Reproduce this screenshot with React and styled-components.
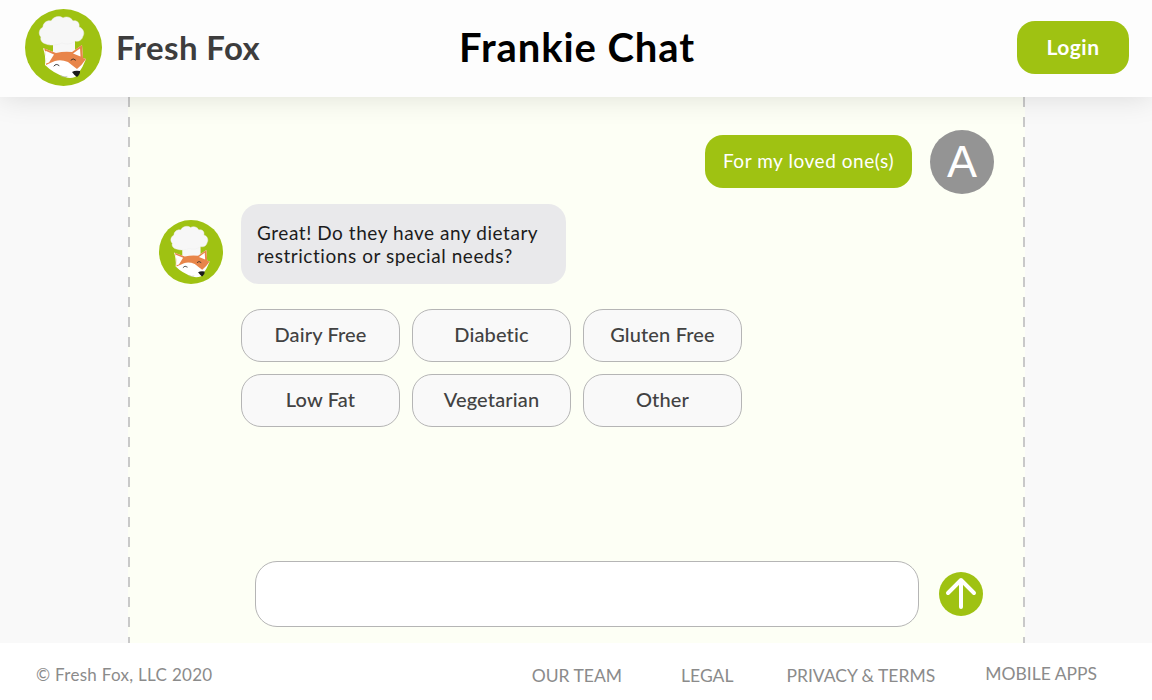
import React from 'react';
import styled, { createGlobalStyle } from 'styled-components';

const GREEN = '#9fc212';
const DASH = 'linear-gradient(#c9c9c9 10px, transparent 10px)';

const GlobalStyle = createGlobalStyle`
  html, body {
    margin: 0;
    padding: 0;
    background: #fff;
    font-family: "Lato", "Noto Sans", sans-serif;
  }
  * { box-sizing: border-box; }
`;

const Page = styled.div`
  width: 1152px;
  height: 700px;
  display: flex;
  flex-direction: column;
  overflow: hidden;
`;

const Header = styled.header`
  position: relative;
  z-index: 2;
  flex: 0 0 97px;
  display: grid;
  grid-template-columns: 1fr auto 1fr;
  align-items: center;
  padding: 0 23px 2px 25px;
  background: #fdfdfd;
  box-shadow: 0 0 28px rgba(0, 0, 0, 0.13);
`;

const Brand = styled.div`
  display: flex;
  align-items: center;
  gap: 14px;
`;

const BrandName = styled.span`
  padding-bottom: 2px;
  font-size: 33px;
  font-weight: 700;
  letter-spacing: 0.4px;
  color: #3d3d3d;
`;

const Title = styled.h1`
  margin: 0;
  padding-bottom: 2px;
  font-size: 40px;
  font-weight: 700;
  letter-spacing: 0.9px;
  color: #000;
`;

const LoginButton = styled.button`
  justify-self: end;
  width: 112px;
  height: 53px;
  padding: 0 0 3px;
  border: none;
  border-radius: 18px;
  background: ${GREEN};
  color: #fff;
  font-family: inherit;
  font-size: 21px;
  font-weight: 700;
  letter-spacing: 0.5px;
`;

const Main = styled.main`
  flex: 1;
  display: flex;
  justify-content: center;
  min-height: 0;
  background: #f9f9f9;
`;

const Panel = styled.section`
  width: 897px;
  margin-left: 1px;
  display: flex;
  flex-direction: column;
  padding: 33px 31px 16px 31px;
  background-color: #fdfff5;
  background-image: ${DASH}, ${DASH};
  background-size: 2px 20px;
  background-position: left top, right top;
  background-repeat: repeat-y;
`;

const UserRow = styled.div`
  display: flex;
  justify-content: flex-end;
  align-items: flex-start;
  gap: 18px;
`;

const BotRow = styled.div`
  display: flex;
  align-items: flex-start;
  gap: 18px;
  margin-top: 10px;
`;

const BotAvatar = styled.div`
  margin-top: 16px;
  height: 64px;
`;

const Bubble = styled.div`
  border-radius: 18px;
  font-size: 19px;
  line-height: 23px;
  letter-spacing: 0.55px;
  ${(p) =>
    p.$mine
      ? `
    height: 53px;
    width: 207px;
    margin-top: 5px;
    padding-bottom: 2px;
    display: flex;
    align-items: center;
    justify-content: center;
    background: ${GREEN};
    color: #fff;
  `
      : `
    width: 325px;
    height: 80px;
    padding: 17px 16px;
    background: #e9e9eb;
    color: #1c1c1c;
  `}
`;

const UserAvatar = styled.div`
  width: 64px;
  height: 64px;
  border-radius: 50%;
  background: #949494;
  color: #fff;
  display: flex;
  align-items: center;
  justify-content: center;
  font-family: "Liberation Sans", sans-serif;
  font-size: 45px;
`;

const Choices = styled.div`
  display: grid;
  grid-template-columns: repeat(3, 159px);
  grid-auto-rows: 53px;
  gap: 12px;
  margin: 25px 0 0 82px;
`;

const Choice = styled.button`
  padding: 0 0 3px;
  border: 1px solid #b5b5b5;
  border-radius: 20px;
  background: #f9f9f9;
  color: #424242;
  font-family: inherit;
  font-size: 20px;
  font-weight: 500;
  letter-spacing: 0.15px;
`;

const Composer = styled.form`
  margin-top: auto;
  display: flex;
  align-items: center;
  gap: 20px;
  padding-left: 96px;
`;

const MessageInput = styled.input`
  width: 664px;
  height: 66px;
  border: 1px solid #b5b5b5;
  border-radius: 22px;
  background: #fff;
`;

const SendButton = styled.button`
  width: 44px;
  height: 44px;
  padding: 0;
  border: none;
  border-radius: 50%;
  background: ${GREEN};
  display: flex;
`;

const Footer = styled.footer`
  position: relative;
  z-index: 1;
  flex: 0 0 57px;
  display: flex;
  justify-content: space-between;
  align-items: center;
  padding: 6px 55px 0 36px;
  background: #fff;
  color: #8b8b8b;
`;

const Copyright = styled.span`
  font-size: 17px;
  letter-spacing: 0.3px;
`;

const FooterNav = styled.nav`
  display: flex;
  align-items: center;
  padding-top: 2px;
`;

const FooterLink = styled.a`
  font-size: 17.5px;
  margin-left: ${(p) => p.$gap}px;
  margin-bottom: ${(p) => (p.$raised ? '4px' : '0')};
`;

const FoxLogo = ({ size }) => (
  <svg width={size} height={size} viewBox="0 0 77 77">
    <circle cx="38.5" cy="38.5" r="38.5" fill={GREEN} />
    {/* chef hat */}
    <rect x="28" y="30" width="22" height="16" fill="#f7f7f7" />
    <path
      d="M21 35c-4-1-6-4-5-7-3-3-2-8 2-10 0-4 4-7 8-6 2-4 8-6 12-3 3-2 8-1 10 3 4-1 7 2 6 6 4 1 6 6 4 9-1 4-4 6-8 5-3 3-9 4-13 2-4 2-11 3-16 1z"
      fill="#f7f7f7"
      stroke="#ededed"
      strokeWidth="0.5"
    />
    {/* fox face */}
    <path
      d="M18 39l13 5q8-2 16-1l10-7 1 13 3 1q-3 8-8 15l-3 3q-5 2-10 0-12-4-20-12 1-9-2-17z"
      fill="#fff"
    />
    <path
      d="M18 39l13 5q8-2 16-1l10-7 1 13 3 1q-4 6-9 10-4-3-9-7-7-3-13-1-5 2-9 4 1-9-2-17z"
      fill="#e8854a"
    />
    <path d="M21 42l8 3.500-5 8-3 1q.5-6-1-12z" fill="#fff" />
    <path d="M55 39.500l-7 5 7.500 3z" fill="#fff" />
    {/* nose and eyes */}
    <path d="M47 63q3-2 8-1 .5 3-3 6-3-2-5-5z" fill="#1a1a1a" />
    <path d="M29 57q2-3 5-.5" stroke="#222" strokeWidth="0.9" fill="none" strokeLinecap="round" />
    <path d="M46 51q2-2.500 4.500 0" stroke="#222" strokeWidth="0.9" fill="none" strokeLinecap="round" />
    <path d="M36 67q3 1.500 6 .5" stroke="#bbb" strokeWidth="0.7" fill="none" strokeLinecap="round" />
  </svg>
);

const choices = ['Dairy Free', 'Diabetic', 'Gluten Free', 'Low Fat', 'Vegetarian', 'Other'];
const footerLinks = [
  { label: 'OUR TEAM', gap: 0 },
  { label: 'LEGAL', gap: 59 },
  { label: 'PRIVACY & TERMS', gap: 53 },
];

export default function App() {
  return (
    <Page>
      <GlobalStyle />
      <Header>
        <Brand>
          <FoxLogo size={77} />
          <BrandName>Fresh Fox</BrandName>
        </Brand>
        <Title>Frankie Chat</Title>
        <LoginButton>Login</LoginButton>
      </Header>
      <Main>
        <Panel>
          <UserRow>
            <Bubble $mine>For my loved one(s)</Bubble>
            <UserAvatar>A</UserAvatar>
          </UserRow>
          <BotRow>
            <BotAvatar>
              <FoxLogo size={64} />
            </BotAvatar>
            <Bubble>
              Great! Do they have any dietary
              <br />
              restrictions or special needs?
            </Bubble>
          </BotRow>
          <Choices>
            {choices.map((c) => (
              <Choice key={c}>{c}</Choice>
            ))}
          </Choices>
          <Composer>
            <MessageInput />
            <SendButton type="button" aria-label="Send">
              <svg width="44" height="44" viewBox="0 0 44 44" fill="none" stroke="#fff" strokeWidth="4" strokeLinecap="round" strokeLinejoin="round">
                <path d="M22 35V9" />
                <path d="M9 21L22 8l13 13" />
              </svg>
            </SendButton>
          </Composer>
        </Panel>
      </Main>
      <Footer>
        <Copyright>© Fresh Fox, LLC 2020</Copyright>
        <FooterNav>
          {footerLinks.map((l) => (
            <FooterLink key={l.label} $gap={l.gap}>{l.label}</FooterLink>
          ))}
          <FooterLink $gap={50} $raised>MOBILE APPS</FooterLink>
        </FooterNav>
      </Footer>
    </Page>
  );
}
